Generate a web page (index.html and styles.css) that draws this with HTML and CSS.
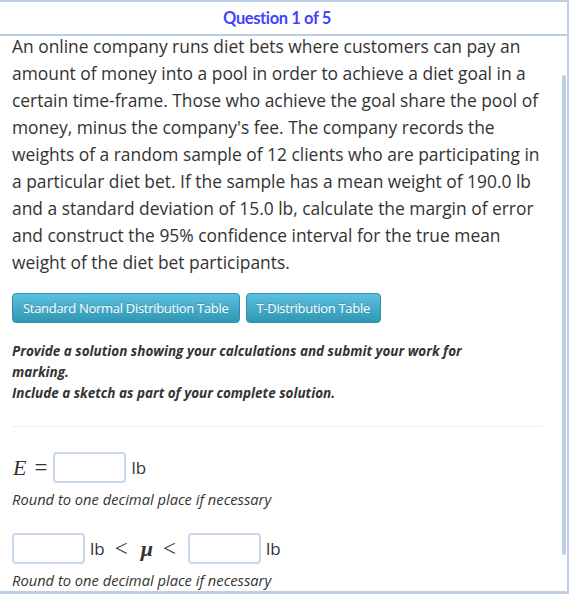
FILE: index.html
```html
<!DOCTYPE html>
<html>
<head>
<meta charset="utf-8">
<link rel="stylesheet" href="styles.css">
</head>
<body>
<div class="frame">
  <div class="header">Question 1 of 5</div>
  <div class="content">
    <p class="question">An online company runs diet bets where customers can pay an amount of money into a pool in order to achieve a diet goal in a certain time-frame. Those who achieve the goal share the pool of money, minus the company's fee. The company records the weights of a random sample of 12 clients who are participating in a particular diet bet. If the sample has a mean weight of 190.0 lb and a standard deviation of 15.0 lb, calculate the margin of error and construct the 95% confidence interval for the true mean weight of the diet bet participants.</p>
    <div class="buttons">
      <button class="btn">Standard Normal Distribution Table</button>
      <button class="btn">T-Distribution Table</button>
    </div>
    <p class="instructions">Provide a solution showing your calculations and submit your work for marking.<br>Include a sketch as part of your complete solution.</p>
    <hr class="sep">
    <div class="answer-row row-e">
      <span class="math">E</span><span class="math-op eq">=</span>
      <span class="input"></span><span class="unit">lb</span>
    </div>
    <p class="hint">Round to one decimal place if necessary</p>
    <div class="answer-row row-ci">
      <span class="input"></span><span class="unit">lb</span>
      <span class="math-op lt">&lt;</span><span class="math mu">μ</span><span class="math-op lt lt-last">&lt;</span>
      <span class="input"></span><span class="unit">lb</span>
    </div>
    <p class="hint">Round to one decimal place if necessary</p>
  </div>
  <div class="scrollbar"></div>
</div>
</body>
</html>
```
FILE: styles.css
```css
html, body {
  margin: 0;
  padding: 0;
  background: #fff;
}
.frame {
  position: relative;
  width: 567px;
  height: 589px;
  border-top: 2px solid #bccfe6;
  border-right: 2px solid #bccfe6;
  border-bottom: 3px solid #bccfe6;
  overflow: hidden;
}
.header {
  position: relative;
  z-index: 1;
  height: 32px;
  padding-right: 13px;
  border-bottom: 2px solid #bccfe6;
  font-family: Lato, "Open Sans", sans-serif;
  font-weight: 700;
  font-size: 16.5px;
  letter-spacing: -0.4px;
  color: #4343ff;
  display: flex;
  align-items: center;
  justify-content: center;
}
.content {
  padding: 0 24px 0 12px;
  font-family: "Open Sans", sans-serif;
  color: #333;
}
.question {
  margin: -3px 0 0;
  font-size: 17.4px;
  line-height: 27px;
}
.buttons {
  display: flex;
  gap: 6px;
  margin-top: 17px;
}
.btn {
  font-family: "Open Sans", sans-serif;
  font-size: 13px;
  letter-spacing: -0.3px;
  color: #fff;
  height: 30px;
  padding: 0 10px;
  border: 1px solid #2e8fae;
  border-radius: 4px;
  background: linear-gradient(#5bc0de, #2f96b4);
  text-shadow: 0 -1px 0 rgba(0,0,0,0.15);
}
.instructions {
  max-width: 500px;
  margin: 18px 0 0;
  font-size: 13.5px;
  font-weight: 700;
  font-style: italic;
  line-height: 21px;
}
.sep {
  border: 0;
  border-top: 1px solid #eee;
  margin: 22px 0 0;
}
.answer-row {
  display: flex;
  align-items: center;
  height: 31px;
}
.row-e {
  margin-top: 25px;
}
.row-ci {
  margin-top: 24px;
}
.math {
  font-family: "Liberation Serif", serif;
  font-style: italic;
  font-size: 22px;
  margin-left: 1px;
}
.math-op {
  font-family: "Liberation Serif", serif;
  font-size: 23px;
}
.eq {
  margin: 0 6px 0 8px;
}
.lt {
  margin: 0 10px;
}
.lt-last {
  margin-right: 12px;
}
.mu {
  font-weight: 700;
  margin: 0 0 0 3px;
}
.input {
  display: inline-block;
  width: 69px;
  height: 27px;
  border: 2px solid #c9d8ec;
  border-radius: 4px;
  background: #fff;
}
.unit {
  font-size: 17px;
  margin-left: 5px;
}
.hint {
  margin: 6px 0 0;
  font-size: 14.7px;
  font-style: italic;
  line-height: 20px;
}
.scrollbar {
  position: absolute;
  right: 1px;
  top: 73px;
  width: 4px;
  height: 480px;
  border-radius: 2px;
  background: #bccfe6;
}
```
